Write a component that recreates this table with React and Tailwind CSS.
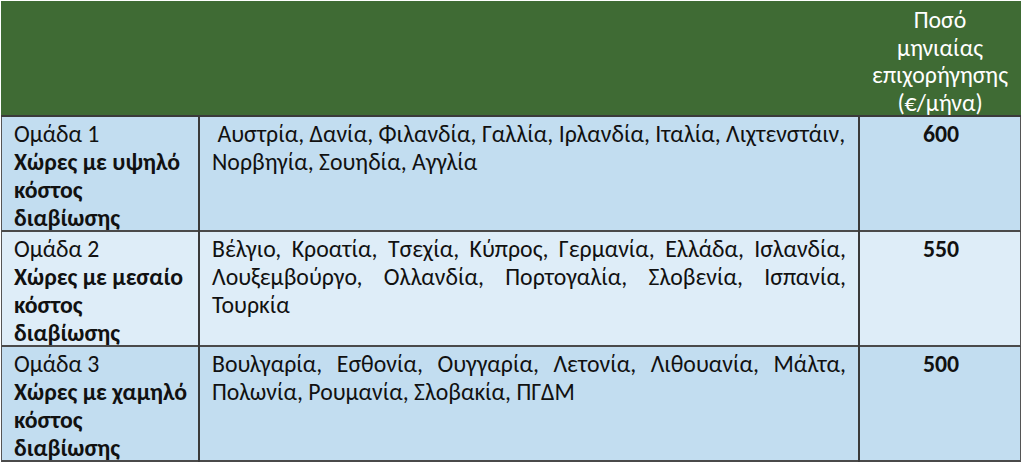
import React from "react";

const font = { fontFamily: 'Carlito, Calibri, "Noto Sans", "Open Sans", sans-serif' };

function JLines({ lines }) {
  return (
    <div>
      {lines.map((l, i) => (
        <div
          key={i}
          className={
            i < lines.length - 1
              ? "text-justify [text-align-last:justify] whitespace-nowrap"
              : "text-left whitespace-pre"
          }
        >
          {l}
        </div>
      ))}
    </div>
  );
}

const rows = [
  {
    bg: "bg-[#c2ddf0]",
    group: "Ομάδα 1",
    title: ["Χώρες με υψηλό", "κόστος", "διαβίωσης"],
    lines: [" Αυστρία, Δανία, Φιλανδία, Γαλλία, Ιρλανδία, Ιταλία, Λιχτενστάιν,", "Νορβηγία, Σουηδία, Αγγλία"],
    justifyFirst: false,
    amount: "600",
  },
  {
    bg: "bg-[#deedf8]",
    group: "Ομάδα 2",
    title: ["Χώρες με μεσαίο", "κόστος", "διαβίωσης"],
    lines: [
      "Βέλγιο, Κροατία, Τσεχία, Κύπρος, Γερμανία, Ελλάδα, Ισλανδία,",
      "Λουξεμβούργο, Ολλανδία, Πορτογαλία, Σλοβενία, Ισπανία,",
      "Τουρκία",
    ],
    justifyFirst: true,
    amount: "550",
  },
  {
    bg: "bg-[#c2ddf0]",
    group: "Ομάδα 3",
    title: ["Χώρες με χαμηλό", "κόστος", "διαβίωσης"],
    lines: [
      "Βουλγαρία, Εσθονία, Ουγγαρία, Λετονία, Λιθουανία, Μάλτα,",
      "Πολωνία, Ρουμανία, Σλοβακία, ΠΓΔΜ",
    ],
    justifyFirst: true,
    amount: "500",
  },
];

export default function App() {
  return (
    <div className="w-[1023px] h-[465px] bg-white overflow-hidden pt-[1px] pl-[1px]" style={font}>
      <div className="w-[1020px] text-[23.8px] leading-[28px] text-[#111]">
        <div className="grid grid-cols-[198px_660px_162px] h-[116px] bg-[#3f6b34] border-b-[2px] border-[#3a3a3a]">
          <div />
          <div />
          <div className="flex flex-col items-center pt-[5px] text-white leading-[27.5px]">
            <div>Ποσό</div>
            <div>μηνιαίας</div>
            <div>επιχορήγησης</div>
            <div>(€/μήνα)</div>
          </div>
        </div>
        {rows.map((r, idx) => (
          <div
            key={idx}
            className={`grid grid-cols-[198px_660px_162px] h-[115px] ${r.bg} border-b-[2px] border-[#4a4a4a] border-l border-r border-l-[#555] border-r-[#555]`}
          >
            <div className="pl-[12px] pt-[3px] border-r-[2px] border-[#3a3a3a]">
              <div>{r.group}</div>
              {r.title.map((t, i) => (
                <div key={i} className="font-bold">{t}</div>
              ))}
            </div>
            <div className="px-[12px] pt-[3px] border-r-[2px] border-[#3a3a3a]">
              {r.justifyFirst ? (
                <JLines lines={r.lines} />
              ) : (
                r.lines.map((l, i) => (
                  <div key={i} className="whitespace-pre">{l}</div>
                ))
              )}
            </div>
            <div className="pt-[3px] text-center font-bold">{r.amount}</div>
          </div>
        ))}
      </div>
    </div>
  );
}
